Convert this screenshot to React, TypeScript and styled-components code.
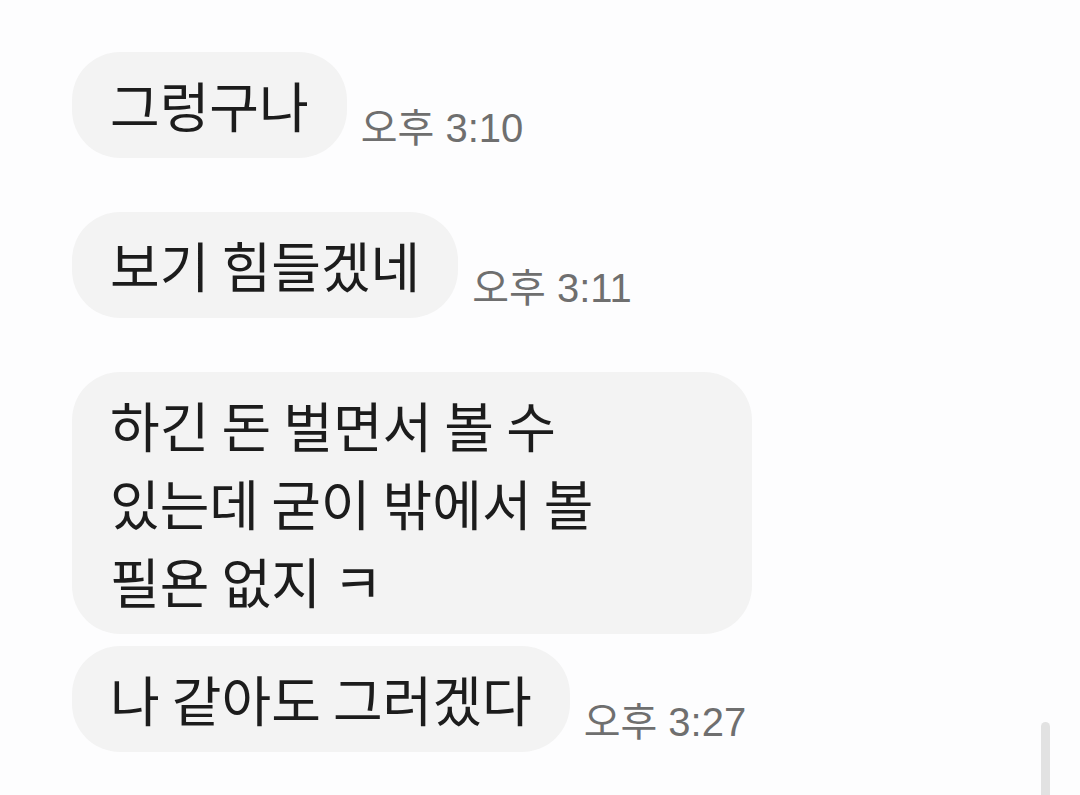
import styled, { createGlobalStyle } from "styled-components";

// 채팅 메시지 목록 (wide: 여러 줄로 접히는 긴 메시지)
const messages = [
  { id: 1, text: "그렁구나", time: "오후 3:10" },
  { id: 2, text: "보기 힘들겠네", time: "오후 3:11" },
  { id: 3, text: "하긴 돈 벌면서 볼 수 있는데 굳이 밖에서 볼 필욘 없지 ㅋ", wide: true },
  { id: 4, text: "나 같아도 그러겠다", time: "오후 3:27" },
];

const Chat = () => {
  return (
    <>
      <GlobalStyle />
      <ChatWrapper>
        {messages.map((msg) => (
          <MessageRow key={msg.id} $hasTime={!!msg.time}>
            <Bubble $wide={!!msg.wide}>{msg.text}</Bubble>
            {msg.time && <TimeLabel>{msg.time}</TimeLabel>}
          </MessageRow>
        ))}
      </ChatWrapper>
      <ScrollThumb />
    </>
  );
};

const GlobalStyle = createGlobalStyle`
  html, body {
    margin: 0;
    padding: 0;
    background: #fdfdfe;
  }
  body {
    font-family: "Noto Sans CJK KR", "Noto Sans", sans-serif;
  }
`;

const ChatWrapper = styled.div`
  display: flex;
  flex-direction: column;
  align-items: flex-start;
  padding: 52px 0 0 72px;
  min-height: 795px;
  box-sizing: border-box;
`;

const MessageRow = styled.div<{ $hasTime: boolean }>`
  display: flex;
  align-items: flex-end;
  gap: 14px;
  margin-bottom: ${({ $hasTime }) => ($hasTime ? "54px" : "12px")};
`;

const Bubble = styled.div<{ $wide: boolean }>`
  box-sizing: border-box;
  width: ${({ $wide }) => ($wide ? "680px" : "auto")};
  padding: 14px ${({ $wide }) => ($wide ? "100px" : "38px")} 14px 38px;
  background: #f3f3f3;
  border-radius: 48px;
  color: #1c1c1c;
  font-size: 54px;
  line-height: 78px;
  word-break: keep-all;
`;

const TimeLabel = styled.span`
  margin-bottom: 8px;
  color: #6f6f6f;
  font-family: "Liberation Sans", "Noto Sans CJK KR", sans-serif;
  font-size: 40px;
  line-height: 44px;
  white-space: nowrap;
`;

const ScrollThumb = styled.div`
  position: fixed;
  top: 722px;
  left: 1041px;
  width: 9px;
  height: 90px;
  border-radius: 5px;
  background: #e2e2e2;
`;

export default Chat;
